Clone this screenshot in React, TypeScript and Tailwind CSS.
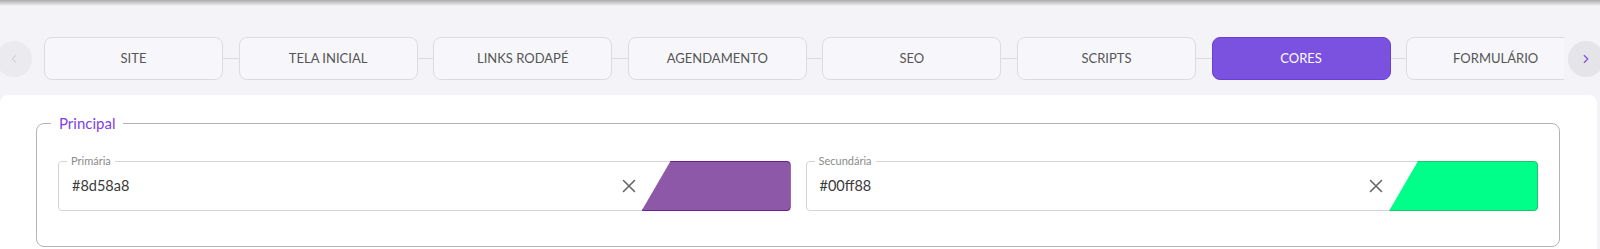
import { ChevronLeft, ChevronRight } from "lucide-react";

const tabs = ["SITE", "TELA INICIAL", "LINKS RODAPÉ", "AGENDAMENTO", "SEO", "SCRIPTS", "CORES", "FORMULÁRIO"];

const ClearIcon = () => (
  <svg width="14" height="14" viewBox="0 0 14 14" fill="none" stroke="#666" strokeWidth="1.6" strokeLinecap="round">
    <path d="M1.5 1.5L12.5 12.5M12.5 1.5L1.5 12.5" />
  </svg>
);

const ColorField = ({ label, value, color, border }: { label: string; value: string; color: string; border: string }) => (
  <div className="relative flex h-[50px] items-center rounded border border-[#d4d4d8] bg-white">
    <span className="absolute -top-[8px] left-[8px] bg-white px-1 text-[11px] leading-[14px] text-[#8a8a8a]">{label}</span>
    <span className="flex-1 pl-[13px] text-[14.5px] text-[#3a3a3a]">{value}</span>
    <button className="mr-[6px] flex h-[14px] w-[14px] items-center justify-center">
      <ClearIcon />
    </button>
    <div
      className="-my-px -mr-px h-[50px] w-[149px] rounded-r border [clip-path:polygon(19.5%_0,100%_0,100%_100%,0_100%)]"
      style={{ backgroundColor: color, borderColor: border }}
    />
  </div>
);

export default function App() {
  return (
    <div className="relative h-[249px] w-full overflow-hidden bg-[#f3f3f8] font-['Lato',sans-serif]">
      <div className="pointer-events-none absolute inset-x-0 top-0 h-[6px] bg-gradient-to-b from-[#ababab] to-transparent" />

      {/* Tabs */}
      <div className="flex items-center pt-[37px]">
        <button className="-ml-1 flex h-9 w-9 shrink-0 items-center justify-center rounded-full bg-[#ebebef] text-[#c4c4c8]">
          <ChevronLeft size={14} strokeWidth={1.6} />
        </button>
        <div className="ml-3 flex min-w-0 flex-1 items-center overflow-hidden">
          {tabs.map((t, i) => (
            <div key={t} className="flex shrink-0 items-center">
              {i > 0 && <span className="h-px w-[15.6px] bg-[#dcdce0]" />}
              <div
                className={
                  t === "CORES"
                    ? "flex h-[43px] w-[179px] items-center justify-center rounded-lg border border-[#6a3fd6] bg-[#7b51df] text-[13px] text-white"
                    : "flex h-[43px] w-[179px] items-center justify-center rounded-lg border border-[#dcdce0] bg-[#f7f7fb] text-[13px] text-[#555]"
                }
              >
                {t}
              </div>
            </div>
          ))}
        </div>
        <button className="-mr-1 ml-1 flex h-9 w-9 shrink-0 items-center justify-center rounded-full bg-[#e5e5e9] text-[#7b51df]">
          <ChevronRight size={14} strokeWidth={2} />
        </button>
      </div>

      {/* Panel */}
      <div className="mr-[3px] mt-[15px] rounded-lg bg-white pb-6 pl-[36px] pr-[37px] pt-[18px]">
        <fieldset className="rounded-lg border border-[#b4b4b8] px-[21px] pb-[35px]">
          <legend className="-ml-[7px] px-2 text-[15px] leading-[20px] text-[#7e3fe6]">Principal</legend>
          <div className="mt-[28px] grid grid-cols-2 gap-[15px]">
            <ColorField label="Primária" value="#8d58a8" color="#8d58a8" border="#6b1f8e" />
            <ColorField label="Secundária" value="#00ff88" color="#00ff88" border="#1ec46a" />
          </div>
        </fieldset>
      </div>
    </div>
  );
}
